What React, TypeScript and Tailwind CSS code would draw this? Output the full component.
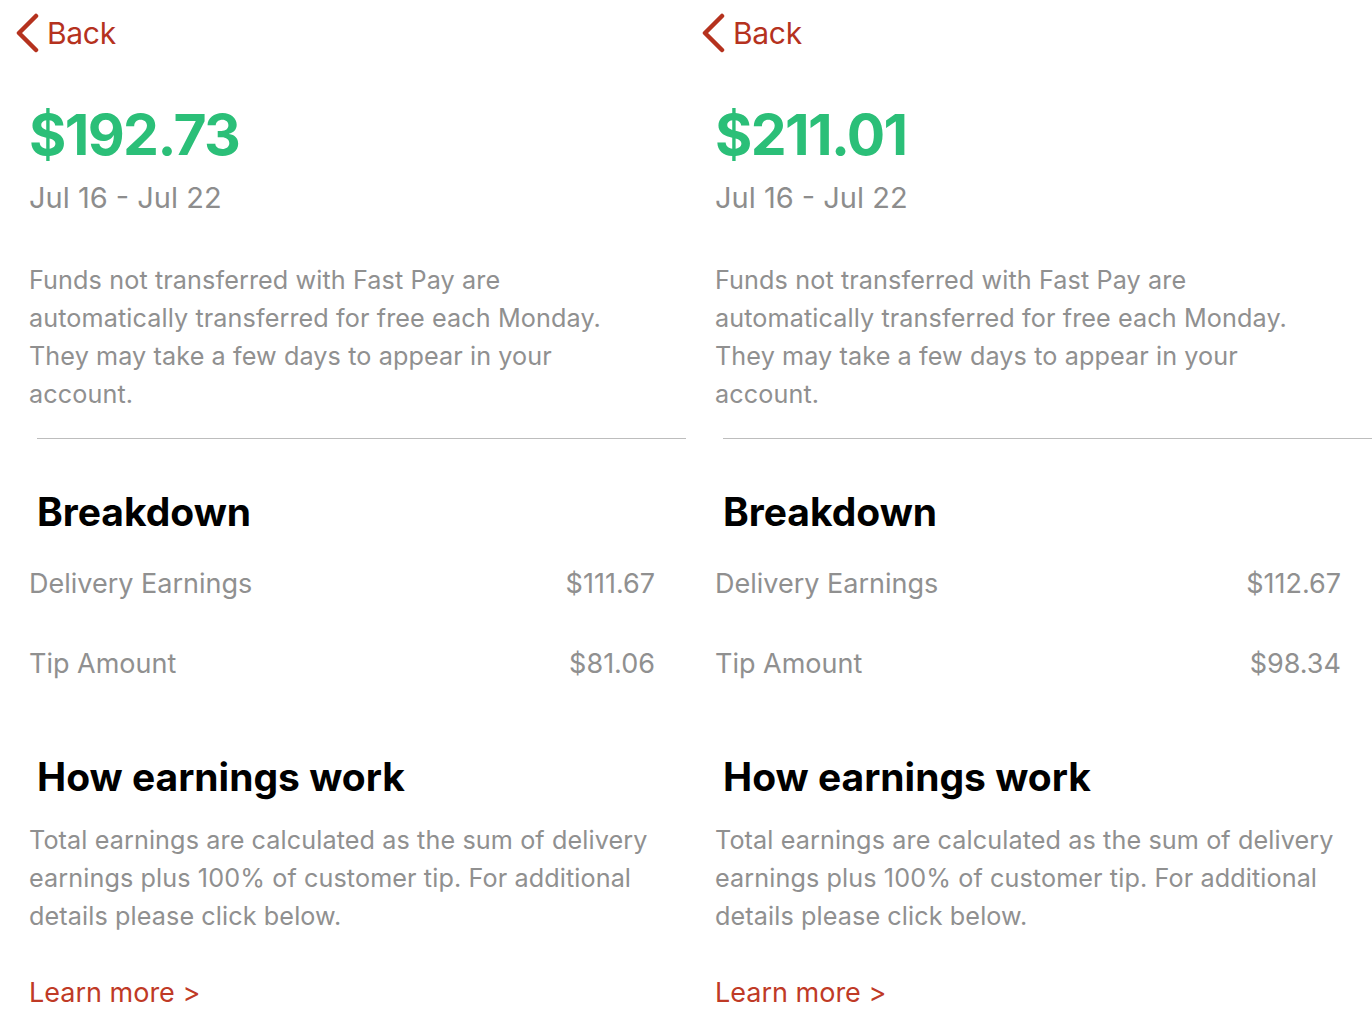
type Props = {
  total: string;
  delivery: string;
  tip: string;
};

function EarningsPanel({ total, delivery, tip }: Props) {
  return (
    <div className="w-[686px] shrink-0 flex flex-col font-['Inter',sans-serif]">
      {/* nav */}
      <div className="h-[66px] flex items-center pl-[14px]">
        <svg width="26" height="40" viewBox="0 0 26 40" className="mr-[7px]">
          <path
            d="M22 3 L5 20 L22 37"
            fill="none"
            stroke="#b5321e"
            strokeWidth="4.5"
            strokeLinecap="round"
            strokeLinejoin="round"
          />
        </svg>
        <span className="text-[30px] leading-[36px] text-[#b5321e] tracking-[-0.3px]">Back</span>
      </div>

      <div className="pl-[29px] mt-[39px] text-[57px] leading-[60px] font-bold text-[#2bbf78] tracking-[-1.6px]">
        {total}
      </div>
      <div className="pl-[29px] mt-[15px] text-[29px] leading-[36px] text-[#8d8d8d]">Jul 16 - Jul 22</div>

      <p className="pl-[29px] pr-[40px] mt-[45px] text-[25.2px] leading-[38px] text-[#909090] tracking-[0.1px]">
        Funds not transferred with Fast Pay are
        <br />
        automatically transferred for free each Monday.
        <br />
        They may take a few days to appear in your
        <br />
        account.
      </p>

      <div className="ml-[37px] mt-[25px] h-px bg-[#bdbdbd]" />

      <h2 className="pl-[37px] mt-[51px] text-[39px] leading-[44px] font-bold text-black">Breakdown</h2>

      <div className="pl-[29px] pr-[31px] mt-[32px] flex justify-between text-[27px] leading-[36px] text-[#909090]">
        <span>Delivery Earnings</span>
        <span>{delivery}</span>
      </div>
      <div className="pl-[29px] pr-[31px] mt-[44px] flex justify-between text-[27px] leading-[36px] text-[#909090]">
        <span>Tip Amount</span>
        <span>{tip}</span>
      </div>

      <h2 className="pl-[37px] mt-[73px] text-[39px] leading-[44px] font-bold text-black">How earnings work</h2>

      <p className="pl-[29px] pr-[10px] mt-[22px] text-[25.2px] leading-[38px] text-[#909090] tracking-[0.1px]">
        Total earnings are calculated as the sum of delivery
        <br />
        earnings plus 100% of customer tip. For additional
        <br />
        details please click below.
      </p>

      <div className="pl-[29px] mt-[40px] text-[27px] leading-[36px] text-[#bf3a26]">Learn more &gt;</div>
    </div>
  );
}

export default function App() {
  return (
    <div className="w-[1372px] h-[1029px] overflow-hidden bg-white flex">
      <EarningsPanel total="$192.73" delivery="$111.67" tip="$81.06" />
      <EarningsPanel total="$211.01" delivery="$112.67" tip="$98.34" />
    </div>
  );
}
